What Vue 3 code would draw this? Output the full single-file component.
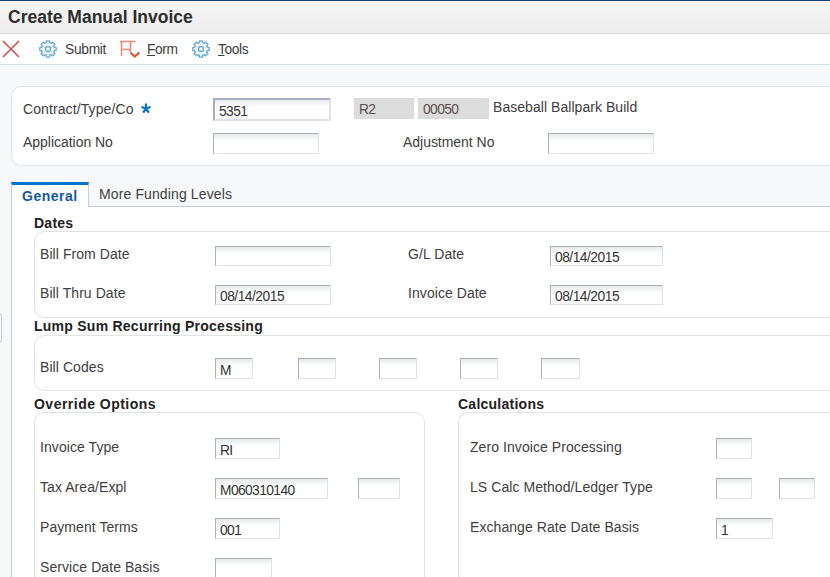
<template>
  <div class="invoice-page">
    <header class="title-bar">
      <h1>Create Manual Invoice</h1>
    </header>

    <nav class="toolbar">
      <button class="tool tool-close" aria-label="Close">
        <svg width="18" height="18" viewBox="0 0 18 18">
          <path d="M1 1L17 17M17 1L1 17" fill="none" stroke="#dc4b48" stroke-width="1.6" />
        </svg>
      </button>
      <button v-for="tool in tools" :key="tool.rest" class="tool" :class="'tool-' + tool.icon">
        <svg v-if="tool.icon === 'form'" width="22" height="19" viewBox="0 0 22 19">
          <path d="M2.5 16V1.5M1 1.5H16.5M2.5 9.5H12M11.5 1.5V12" fill="none" stroke="#f08a7b" stroke-width="1.6" />
          <path d="M11.5 12.5L15.8 16.6L20.5 12.5" fill="none" stroke="#e8492f" stroke-width="2" />
        </svg>
        <svg v-else width="18" height="18" viewBox="0 0 18 18">
          <path :d="gearPath" fill="#eff7fc" stroke="#69abdc" stroke-width="1.4" stroke-linejoin="round" />
          <rect x="6.7" y="6.7" width="4.6" height="4.6" rx="1" fill="#fff" stroke="#69abdc" stroke-width="1.4" />
        </svg>
        <span><u v-if="tool.key">{{ tool.key }}</u>{{ tool.rest }}</span>
      </button>
    </nav>

    <main class="content">
      <section class="contract-card">
        <div class="row contract-row">
          <label>Contract/Type/Co
            <svg class="required" width="10" height="11" viewBox="0 0 10 11">
              <path d="M5 5.5V0.5M5 5.5L0.4 4M5 5.5L9.6 4M5 5.5L2.2 9.6M5 5.5L7.8 9.6" fill="none" stroke="#0a70cc" stroke-width="2.3" />
            </svg>
          </label>
          <input v-model="contract" class="field field-focus" :style="{ width: '118px' }" />
          <span class="readonly readonly-type">R2</span>
          <span class="readonly readonly-co">00050</span>
          <span class="description">Baseball Ballpark Build</span>
        </div>
        <div class="row application-row">
          <label>Application No</label>
          <input class="field" :style="{ width: '106px' }" />
          <label>Adjustment No</label>
          <input class="field" :style="{ width: '106px' }" />
        </div>
      </section>

      <div class="tabs">
        <button
          v-for="tab in tabs"
          :key="tab"
          class="tab"
          :class="{ active: tab === activeTab }"
          @click="activeTab = tab"
        >{{ tab }}</button>
      </div>

      <div class="panel">
        <h2>Dates</h2>
        <div class="group group-dates">
          <div v-for="(row, i) in dateRows" :key="i" class="row date-row">
            <template v-for="cell in row" :key="cell.label">
              <label>{{ cell.label }}</label>
              <input v-model="cell.value" class="field field-date" :style="{ width: cell.width + 'px' }" />
            </template>
          </div>
        </div>

        <h2>Lump Sum Recurring Processing</h2>
        <div class="group group-codes">
          <div class="row code-row">
            <label>Bill Codes</label>
            <input
              v-for="(code, i) in billCodes"
              :key="i"
              v-model="code.value"
              class="field"
              :style="{ width: code.width + 'px' }"
            />
          </div>
        </div>

        <div class="columns">
          <section v-for="group in groups" :key="group.title">
            <h2>{{ group.title }}</h2>
            <div class="group group-options" :class="group.name">
              <div v-for="row in group.rows" :key="row.label" class="row">
                <label>{{ row.label }}</label>
                <input
                  v-for="(f, i) in row.fields"
                  :key="i"
                  v-model="f.value"
                  class="field"
                  :style="{ width: f.width + 'px' }"
                />
              </div>
            </div>
          </section>
        </div>
      </div>
    </main>

    <div class="splitter-handle"></div>
  </div>
</template>

<script setup>
import { ref } from 'vue';

const tools = [
  { icon: 'submit', key: '', rest: 'Submit' },
  { icon: 'form', key: 'F', rest: 'orm' },
  { icon: 'tools', key: 'T', rest: 'ools' }
];

// eight square teeth around a ring
const gearPath = (() => {
  const points = [];
  for (let i = 0; i < 8; i++) {
    [[-15, 6.6], [-11, 8.3], [11, 8.3], [15, 6.6]].forEach(([offset, r]) => {
      const a = ((i * 45 + offset) * Math.PI) / 180;
      points.push(`${(9 + r * Math.cos(a)).toFixed(2)} ${(9 + r * Math.sin(a)).toFixed(2)}`);
    });
  }
  return 'M' + points.join('L') + 'Z';
})();

const tabs = ['General', 'More Funding Levels'];
const activeTab = ref('General');
const contract = ref('5351');

const dateRows = ref([
  [
    { label: 'Bill From Date', value: '', width: 116 },
    { label: 'G/L Date', value: '08/14/2015', width: 113 }
  ],
  [
    { label: 'Bill Thru Date', value: '08/14/2015', width: 116 },
    { label: 'Invoice Date', value: '08/14/2015', width: 113 }
  ]
]);

const billCodes = ref([
  { value: 'M', width: 38 },
  { value: '', width: 38 },
  { value: '', width: 38 },
  { value: '', width: 38 },
  { value: '', width: 39 }
]);

const groups = ref([
  {
    title: 'Override Options',
    name: 'override',
    rows: [
      { label: 'Invoice Type', fields: [{ value: 'RI', width: 65 }] },
      { label: 'Tax Area/Expl', fields: [{ value: 'M060310140', width: 113 }, { value: '', width: 42 }] },
      { label: 'Payment Terms', fields: [{ value: '001', width: 65 }] },
      { label: 'Service Date Basis', fields: [{ value: '', width: 57 }] }
    ]
  },
  {
    title: 'Calculations',
    name: 'calculations',
    rows: [
      { label: 'Zero Invoice Processing', fields: [{ value: '', width: 36 }] },
      { label: 'LS Calc Method/Ledger Type', fields: [{ value: '', width: 36 }, { value: '', width: 36 }] },
      { label: 'Exchange Rate Date Basis', fields: [{ value: '1', width: 57 }] }
    ]
  }
]);
</script>

<style>
body {
  margin: 0;
  overflow: hidden;
}
</style>

<style scoped>
.invoice-page {
  position: relative;
  display: flex;
  flex-direction: column;
  box-sizing: border-box;
  height: 577px;
  overflow: hidden;
  border-top: 1px solid #1b416b;
  background: #f6f8fa;
  color: #404040;
  font-family: "Liberation Sans", Arial, sans-serif;
  font-size: 14px;
  letter-spacing: 0.07px;
}

.invoice-page * {
  box-sizing: border-box;
}

button {
  padding: 0;
  border: 0;
  background: none;
  color: inherit;
  font: inherit;
  letter-spacing: inherit;
}

.title-bar {
  flex: none;
  height: 33px;
  padding-left: 8px;
  border-bottom: 1px solid #d3d8dd;
  background: linear-gradient(#f5f5f5, #eee);
}

h1 {
  margin: 0;
  color: #2d2d2d;
  font-size: 17.5px;
  font-weight: bold;
  letter-spacing: 0;
  line-height: 32px;
}

.toolbar {
  flex: none;
  display: flex;
  align-items: center;
  height: 31px;
  padding-left: 2px;
  border-bottom: 1px solid #d5dce2;
  background: #fff;
}

.tool {
  display: flex;
  align-items: center;
  font-size: 13.8px;
  letter-spacing: -0.4px;
}

.tool svg {
  display: block;
}

.tool-close {
  width: 37px;
}

.tool-submit {
  width: 80px;
  gap: 8px;
  letter-spacing: -0.3px;
}

.tool-form {
  width: 73px;
  gap: 6px;
}

.tool-tools {
  gap: 8px;
}

.content {
  flex: 1;
  padding: 21px 0 0 11px;
}

.contract-card {
  height: 80px;
  padding: 11px 0 0 11px;
  border: 1px solid #dfe4e8;
  border-right: 0;
  border-radius: 10px 0 0 10px;
  background: #fff;
}

.row {
  display: grid;
  justify-items: start;
  align-items: start;
}

.contract-row {
  grid-template-columns: 190px 141px 64px 75px auto;
  height: 35px;
}

.application-row {
  grid-template-columns: 190px 190px 145px auto;
}

label,
.description {
  line-height: 16px;
  white-space: nowrap;
}

label {
  padding-top: 1px;
}

.contract-row label {
  padding-top: 3px;
  letter-spacing: 0.1px;
}

.application-row label {
  letter-spacing: -0.03px;
}

.description {
  padding-top: 1px;
  letter-spacing: 0.05px;
}

.required {
  margin-left: 3px;
  vertical-align: 0;
}

.field {
  height: 21px;
  margin: 0;
  padding: 4px 2px 0 4px;
  border: 1px solid;
  border-color: #a9afba #dfe2e8 #dfe2e8 #a9afba;
  border-radius: 0;
  outline: none;
  background: linear-gradient(#e6eaeb, #fff 7px);
  color: #333;
  font-family: inherit;
  font-size: 13.8px;
  letter-spacing: -0.6px;
  line-height: 15px;
}

.field-focus {
  height: 23px;
  border-width: 2px;
}

.field-date {
  height: 20px;
  padding-top: 3px;
  letter-spacing: -0.5px;
}

.readonly {
  height: 21px;
  padding: 3px 4px 0;
  border: 1px solid #d8dbe3;
  background: #dcdcdc;
  color: #5b4f4d;
  font-size: 13.8px;
  letter-spacing: -0.6px;
  line-height: 15px;
}

.readonly-type {
  width: 60px;
}

.readonly-co {
  width: 71px;
}

.tabs {
  display: flex;
  height: 25px;
  margin-top: 16px;
}

.tab {
  flex: 1;
  padding: 0 0 0 10px;
  border-bottom: 1px solid #c4ccd6;
  letter-spacing: 0.12px;
  line-height: 24px;
  text-align: left;
}

.tab.active {
  flex: none;
  width: 78px;
  padding: 1px 0 0 10px;
  border: 1px solid #c4ccd6;
  border-top: 3px solid #0572ce;
  border-bottom: 0;
  background: #fff;
  color: #145c9e;
  font-weight: bold;
  letter-spacing: 0.5px;
  line-height: 21px;
}

.panel {
  height: 380px;
  padding: 8px 0 0 22px;
  border-left: 1px solid #c4ccd6;
  background: #fff;
}

h2 {
  margin: 0;
  color: #222;
  font-size: 14px;
  font-weight: bold;
  letter-spacing: 0.25px;
  line-height: 16px;
}

.columns section:first-child h2 {
  letter-spacing: 0.48px;
}

.group {
  border: 1px solid #dfe4e6;
  border-right: 0;
  border-radius: 10px 0 0 10px;
}

.group-dates {
  display: grid;
  align-content: start;
  gap: 19px;
  height: 87px;
  padding: 14px 0 0 5px;
}

.date-row {
  grid-template-columns: 175px 193px 142px auto;
}

.date-row label {
  padding-top: 0;
}

.group-codes {
  height: 56px;
  margin-top: 1px;
  padding: 22px 0 0 5px;
}

.code-row {
  grid-template-columns: 175px 83px 81px 81px 81px auto;
}

.columns {
  display: grid;
  grid-template-columns: 391px 1fr;
  column-gap: 33px;
  padding-top: 5px;
}

.group-options {
  display: grid;
  align-content: start;
  gap: 19px;
  height: 200px;
  padding-top: 25px;
}

.override {
  padding-left: 5px;
  border-right: 1px solid #dfe4e6;
  border-radius: 10px;
}

.override .row {
  grid-template-columns: 175px 143px auto;
}

.calculations {
  padding-left: 11px;
}

.calculations .row {
  grid-template-columns: 246px 63px auto;
}

.splitter-handle {
  position: absolute;
  top: 312px;
  left: -4px;
  width: 6px;
  height: 30px;
  border: 1px solid #c4ccd6;
  border-radius: 3px;
}
</style>
